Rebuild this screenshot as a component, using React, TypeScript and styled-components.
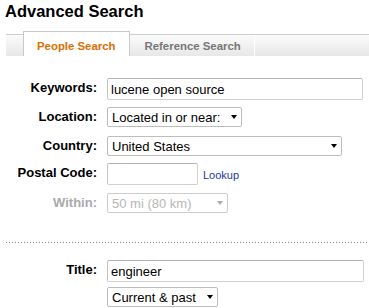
import React from "react";
import styled, { createGlobalStyle } from "styled-components";

const GlobalStyle = createGlobalStyle`
  body {
    margin: 0;
    background: #fff;
    font-family: "Liberation Sans", Arial, sans-serif;
    color: #000;
  }
`;

const Page = styled.div`
  padding-left: 6px;
`;

const Heading = styled.h1`
  margin: 0 0 0 -1px;
  padding-top: 1px;
  font-size: 16.5px;
  line-height: 20px;
  font-weight: bold;
`;

const TabBar = styled.div`
  display: flex;
  align-items: flex-end;
  height: 25px;
  margin-top: 10px;
  padding-left: 17px;
  background: linear-gradient(
    to bottom,
    transparent 0,
    transparent 3px,
    #cdcdcd 3px,
    #cdcdcd 4px,
    #fbfbfb 4px,
    #e7e7e7 100%
  );
`;

const Tab = styled.div<{ $active?: boolean }>`
  box-sizing: border-box;
  display: flex;
  align-items: flex-end;
  height: ${(p) => (p.$active ? "25px" : "21px")};
  padding: ${(p) => (p.$active ? "0 13px 3px 13px" : "0 13px 3px 15px")};
  border: ${(p) => (p.$active ? "1px solid #c9c9c9" : "none")};
  border-bottom: none;
  border-right: ${(p) => (p.$active ? "1px solid #c9c9c9" : "1px solid #fff")};
  background: ${(p) => (p.$active ? "#fff" : "transparent")};
  color: ${(p) => (p.$active ? "#dd6e00" : "#777")};
  font-size: 11.4px;
  font-weight: bold;
  line-height: 14px;
  white-space: nowrap;
`;

const Form = styled.div`
  margin-top: 22px;
`;

const Row = styled.div<{ $gap: number }>`
  display: grid;
  grid-template-columns: 91px auto;
  column-gap: 10px;
  align-items: start;
  margin-bottom: ${(p) => p.$gap}px;
`;

const Label = styled.label<{ $muted?: boolean }>`
  padding-top: 2px;
  text-align: right;
  font-size: 13px;
  font-weight: bold;
  line-height: 15px;
  color: ${(p) => (p.$muted ? "#aaa" : "#000")};
  white-space: nowrap;
`;

const Field = styled.div`
  display: flex;
  flex-direction: column;
  align-items: flex-start;
  gap: 5px;
`;

const Inline = styled.div`
  display: flex;
  align-items: center;
  gap: 5px;
`;

const TextInput = styled.input<{ $w: number }>`
  box-sizing: border-box;
  width: ${(p) => p.$w}px;
  height: 22px;
  margin: 0;
  padding: 0 3px;
  border: 1px solid #d0d0d0;
  border-top-color: #b4b4b4;
  border-left-color: #c4c4c4;
  border-radius: 2px;
  font-family: "Liberation Sans", Arial, sans-serif;
  font-size: 13px;
  color: #000;
  outline: none;
`;

const SelectWrap = styled.div<{ $w: number }>`
  position: relative;
  width: ${(p) => p.$w}px;
`;

const Select = styled.select<{ $muted?: boolean }>`
  appearance: none;
  box-sizing: border-box;
  width: 100%;
  height: 20px;
  margin: 0;
  padding: 0 16px 0 4px;
  border: 1px solid ${(p) => (p.$muted ? "#b8b8b8" : "#bdbdbd")};
  border-radius: 2px;
  background: #fff;
  font-family: "Liberation Sans", Arial, sans-serif;
  font-size: 13px;
  color: ${(p) => (p.$muted ? "#999" : "#000")};
  outline: none;
`;

const Arrow = styled.span<{ $muted?: boolean }>`
  position: absolute;
  right: 5px;
  top: 8px;
  width: 0;
  height: 0;
  border-left: 3.5px solid transparent;
  border-right: 3.5px solid transparent;
  border-top: 4px solid ${(p) => (p.$muted ? "#aaa" : "#000")};
  pointer-events: none;
`;

const Lookup = styled.a`
  font-size: 11px;
  color: #1a3a9c;
  text-decoration: none;
  padding-top: 2px;
`;

const Divider = styled.div`
  height: 1px;
  margin: 29px 0 17px;
  background-image: linear-gradient(to right, #8a8a8a 1px, transparent 1px);
  background-size: 3px 1px;
`;

type DropProps = {
  width: number;
  value: string;
  muted?: boolean;
};

function Dropdown({ width, value, muted }: DropProps) {
  return (
    <SelectWrap $w={width}>
      <Select $muted={muted} disabled={muted} defaultValue={value}>
        <option>{value}</option>
      </Select>
      <Arrow $muted={muted} />
    </SelectWrap>
  );
}

export default function App() {
  return (
    <Page>
      <GlobalStyle />
      <Heading>Advanced Search</Heading>
      <TabBar>
        <Tab $active>People Search</Tab>
        <Tab>Reference Search</Tab>
      </TabBar>

      <Form>
        <Row $gap={7}>
          <Label>Keywords:</Label>
          <TextInput $w={256} defaultValue="lucene open source" />
        </Row>
        <Row $gap={9}>
          <Label>Location:</Label>
          <Dropdown width={135} value="Located in or near:" />
        </Row>
        <Row $gap={7}>
          <Label>Country:</Label>
          <Dropdown width={235} value="United States" />
        </Row>
        <Row $gap={8}>
          <Label>Postal Code:</Label>
          <Inline>
            <TextInput $w={91} />
            <Lookup href="#">Lookup</Lookup>
          </Inline>
        </Row>
        <Row $gap={0}>
          <Label $muted>Within:</Label>
          <Dropdown width={121} value="50 mi (80 km)" muted />
        </Row>

        <Divider />

        <Row $gap={0}>
          <Label>Title:</Label>
          <Field>
            <TextInput $w={257} defaultValue="engineer" />
            <Dropdown width={111} value="Current & past" />
          </Field>
        </Row>
      </Form>
    </Page>
  );
}
